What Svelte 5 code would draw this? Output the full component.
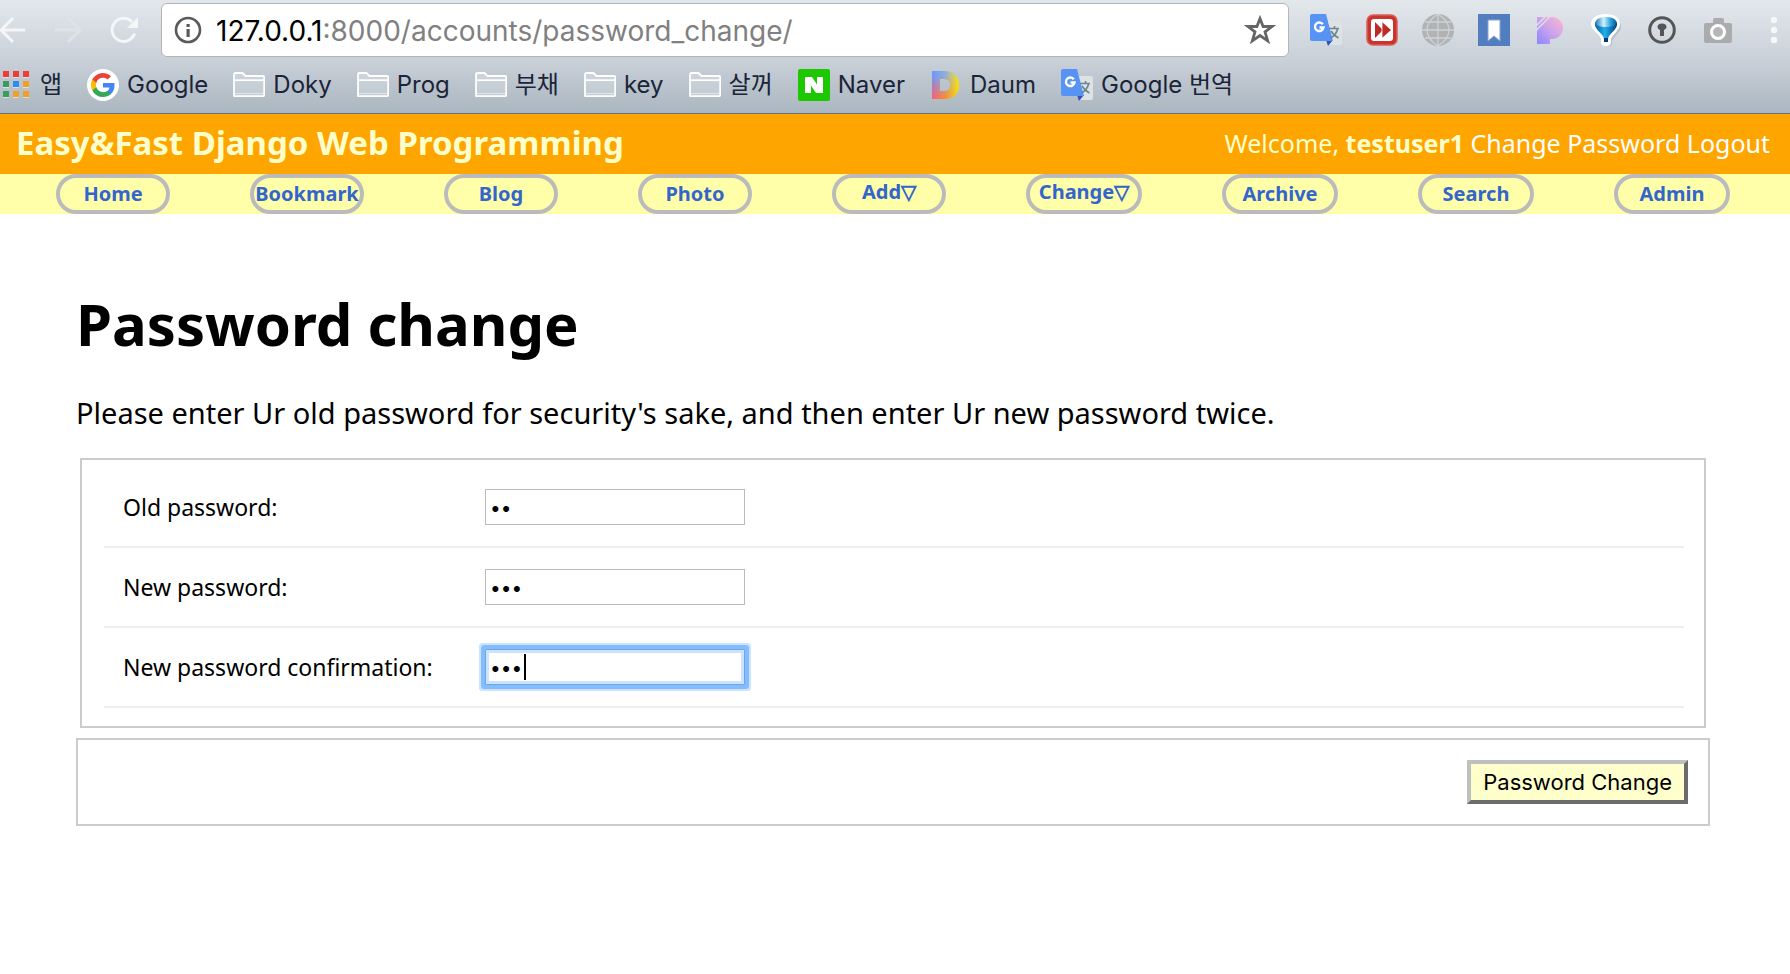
<script lang="ts">
  const bookmarks = [
    { label: '앱', icon: 'apps' },
    { label: 'Google', icon: 'google' },
    { label: 'Doky', icon: 'folder' },
    { label: 'Prog', icon: 'folder' },
    { label: '부채', icon: 'folder' },
    { label: 'key', icon: 'folder' },
    { label: '살꺼', icon: 'folder' },
    { label: 'Naver', icon: 'naver' },
    { label: 'Daum', icon: 'daum' },
    { label: 'Google 번역', icon: 'translate' }
  ];

  const extensions = [
    { label: 'Translate', icon: 'translate' },
    { label: 'Fast forward', icon: 'forward' },
    { label: 'Globe', icon: 'globe' },
    { label: 'Save page', icon: 'save' },
    { label: 'Stripes', icon: 'stripes' },
    { label: 'Balloon', icon: 'balloon' },
    { label: 'Passwords', icon: 'keyhole' },
    { label: 'Capture', icon: 'camera' },
    { label: 'Menu', icon: 'dots' }
  ];

  const menu = [
    { label: 'Home' },
    { label: 'Bookmark' },
    { label: 'Blog' },
    { label: 'Photo' },
    { label: 'Add▽', drop: true },
    { label: 'Change▽', drop: true },
    { label: 'Archive' },
    { label: 'Search' },
    { label: 'Admin' }
  ];

  let fields = $state([
    { id: 'old_password', label: 'Old password:', value: 'ab', active: false },
    { id: 'new_password1', label: 'New password:', value: 'abc', active: false },
    { id: 'new_password2', label: 'New password confirmation:', value: 'abc', active: true }
  ]);
</script>

{#snippet icon(name: string)}
  <svg class="icon" viewBox="0 0 32 32" aria-hidden="true">
    {#if name === 'apps'}
      <path fill="#f23b36" d="M3 2h6v6H3zM13 2h6v6h-6zM23 2h6v6h-6z" />
      <path fill="#3a9d59" d="M3 12h6v6H3zM3 22h6v6H3z" />
      <path fill="#2a8df3" d="M13 12h6v6h-6z" />
      <path fill="#f0a125" d="M23 12h6v6h-6zM13 22h6v6h-6zM23 22h6v6h-6z" />
      <path fill="#fff" opacity=".5" d="M3 8h6v1H3zM13 8h6v1h-6zM23 8h6v1h-6zM3 18h6v1H3zM13 18h6v1h-6zM23 18h6v1h-6zM3 28h6v1H3zM13 28h6v1h-6zM23 28h6v1h-6z" />
    {:else if name === 'google'}
      <circle cx="16" cy="16" r="16" fill="#fff" />
      <g transform="translate(4 4)">
        <path fill="#4285f4" d="M23.5 12.3c0-.8-.1-1.6-.2-2.3H12v4.5h6.500a5.500 5.500 0 0 1-2.400 3.600v3h3.900c2.200-2.100 3.500-5.100 3.500-8.800z" />
        <path fill="#34a853" d="M12 24c3.200 0 6-1.100 8-2.900l-3.900-3a7.200 7.200 0 0 1-10.800-3.800h-4v3.100A12 12 0 0 0 12 24z" />
        <path fill="#fbbc05" d="M5.300 14.300a7.200 7.200 0 0 1 0-4.600V6.600h-4a12 12 0 0 0 0 10.800z" />
        <path fill="#ea4335" d="M12 4.800c1.800 0 3.400.6 4.600 1.800l3.400-3.400A12 12 0 0 0 1.300 6.600l4 3.100A7.200 7.200 0 0 1 12 4.800z" />
      </g>
    {:else if name === 'folder'}
      <path fill="#fff" fill-opacity=".2" stroke="#fff" stroke-width="1.800" stroke-linejoin="round" d="M1 27V5.500q0-1.500 1.500-1.500h7l3 3H30q1.200 0 1.200 1.200V26q0 1.200-1.200 1.200H2.200Q1 27.200 1 26z" />
      <path stroke="#fff" stroke-width="1.700" d="M1 11.200h30" />
      <path stroke="#fff" stroke-opacity=".5" d="M1 24.500h30" />
    {:else if name === 'naver'}
      <rect width="32" height="32" rx="2" fill="#1ec800" />
      <path fill="#fff" d="M7 8h7l5 7.500V8h6v16h-7l-5-7.500V24H7z" />
    {:else if name === 'daum'}
      <defs>
        <linearGradient id="daum-x"><stop offset="0" stop-color="#6b97ff" /><stop offset=".5" stop-color="#90afd8" /><stop offset=".75" stop-color="#c4c982" /><stop offset="1" stop-color="#ffe600" /></linearGradient>
        <linearGradient id="daum-w"><stop offset="0" stop-color="#ff5b72" /><stop offset=".5" stop-color="#ff8a2a" /><stop offset="1" stop-color="#ffd800" /></linearGradient>
        <linearGradient id="daum-f" x2="0" y2="1"><stop offset=".2" stop-color="#000" /><stop offset=".95" stop-color="#fff" /></linearGradient>
        <mask id="daum-m"><rect width="32" height="32" fill="url(#daum-f)" /></mask>
      </defs>
      <path fill="url(#daum-x)" fill-rule="evenodd" d="M2 2h13q14 1 14 14T15 30H2zM10 10v12h4q6 0 6-6t-6-6z" />
      <path fill="url(#daum-w)" mask="url(#daum-m)" fill-rule="evenodd" d="M2 2h13q14 1 14 14T15 30H2zM10 10v12h4q6 0 6-6t-6-6z" />
    {:else if name === 'translate'}
      <path fill="#dfe2e5" d="M14 7h16q2 0 2 2v20q0 2-2 2H19z" />
      <path fill="#3551c4" d="M16 26h7l-5 6z" />
      <path fill="#5693f5" d="M2 0h14l7 27H2q-2 0-2-2V2q0-2 2-2z" />
      <path fill="none" stroke="#fff" stroke-width="2.400" d="M12.800 10.300A4.300 4.300 0 1 0 13.500 13.500H9.500" />
      <path fill="none" stroke="#6b8791" stroke-width="1.600" d="M19 14.500h10M24.500 12v2.500M27.500 15q-1 5.500-7 9M21 17q2.500 4.500 7.500 7" />
    {:else if name === 'forward'}
      <rect x="1" y="1" width="30" height="30" rx="6" fill="#c9352d" stroke="#d9605a" stroke-width="1.500" />
      <rect x="5" y="5" width="22" height="22" rx="3" fill="#fff" />
      <path fill="#bd2b24" d="M9 8l7 7V8l9 8-9 8v-7l-7 7z" />
      <path stroke="#fff" stroke-width=".8" d="M16 8v16" />
    {:else if name === 'globe'}
      <circle cx="16" cy="16" r="16" fill="#b0b2b4" />
      <path fill="none" stroke="#cfd3d6" stroke-width="1.300" d="M16 0v32M0 16h32M3 8h26M3 24h26M16 0Q5 7 5 16t11 16M16 0q11 7 11 16T16 32" />
    {:else if name === 'save'}
      <path fill="#527dbf" d="M0 0h32v32H0z" />
      <path fill="#fff" stroke="#86a5d5" d="M10 6h12v21l-6-5-6 5z" />
    {:else if name === 'stripes'}
      <defs><linearGradient id="stripe-g" x1="1" x2="0" y2="1"><stop offset="0" stop-color="#ffb6cf" /><stop offset=".5" stop-color="#cda2ec" /><stop offset="1" stop-color="#8a86ff" /></linearGradient></defs>
      <path fill="url(#stripe-g)" d="M3 3h15a11 11 0 0 1 0 22h-2v5H3z" />
      <path stroke="#dbe0e5" stroke-width="1.500" d="M2 12L12 2M2 16.500L16.500 2" />
    {:else if name === 'balloon'}
      <defs>
        <linearGradient id="balloon-g"><stop offset="0" stop-color="#1478b4" /><stop offset=".4" stop-color="#d4f0fc" /><stop offset=".7" stop-color="#2ba6e0" /><stop offset="1" stop-color="#07518c" /></linearGradient>
        <linearGradient id="balloon-b"><stop offset="0" stop-color="#0a5f9f" /><stop offset=".45" stop-color="#1fb0ec" /><stop offset="1" stop-color="#063f78" /></linearGradient>
      </defs>
      <path fill="#9aa3ab" opacity=".5" d="M3 13C3 6 9 1 17 1s14 5 14 12c0 5-7 9-9 14v2c0 3-2 4-5 4s-5-1-5-4v-2C10 22 3 18 3 13z" />
      <path fill="#fff" d="M1 10C1 4 7 0 16 0s14 4 14 10c0 6-7 10-9 15v3c0 3-2 4-5 4s-5-1-5-4v-3C9 20 1 16 1 10z" />
      <path fill="url(#balloon-b)" d="M5 9h22c1 5-5 9-8 13-1 2-1 3-1 6h-4c0-3 0-4-1-6-3-4-9-8-8-13z" />
      <path fill="url(#balloon-g)" d="M5 9c1-4 5-6 11-6s10 2 11 6c0 2-5 4-11 4S5 11 5 9z" />
      <path fill="#0a3a66" d="M14 24h4v4h-4z" />
    {:else if name === 'keyhole'}
      <circle cx="16" cy="16" r="12.300" fill="none" stroke="#555" stroke-width="3" />
      <path fill="#555" d="M11.500 13q0-3.500 4.500-3.500t4.500 3.500q0 2-2.500 3v6h-4v-6q-2.500-1-2.500-3z" />
    {:else if name === 'camera'}
      <path fill="#a9abad" d="M4 9h7V6q0-2 2-2h7q2 0 2 2v3h6q2 0 2 2v16q0 2-2 2H4q-2 0-2-2V11q0-2 2-2z" />
      <circle cx="16" cy="18" r="6.500" fill="#b5b7b9" stroke="#fff" stroke-width="3" />
    {:else}
      <g fill="#f5f7f8"><circle cx="16" cy="6" r="3.200" /><circle cx="16" cy="16" r="3.200" /><circle cx="16" cy="26" r="3.200" /></g>
    {/if}
  </svg>
{/snippet}

<div class="browser">
  <div class="toolbar">
    <button class="tool" aria-label="Back">
      <svg class="back" viewBox="0 0 28 32" fill="none" stroke="#f4f6f8" stroke-width="3" aria-hidden="true"><path d="M25 16H2M13 4L1 16l12 12" /></svg>
    </button>
    <button class="tool" aria-label="Forward">
      <svg class="icon" viewBox="0 0 32 32" fill="none" stroke="#dfe3e7" stroke-width="3" aria-hidden="true"><path d="M3 16h24M16 4l12 12-12 12" /></svg>
    </button>
    <button class="tool" aria-label="Reload">
      <svg class="icon" viewBox="0 0 32 32" aria-hidden="true"><path fill="none" stroke="#f4f6f8" stroke-width="3" d="M26.500 19.500A11.500 11.500 0 1 1 24 8" /><path fill="#f4f6f8" d="M30 3v11H19z" /></svg>
    </button>
    <div class="address">
      <svg class="icon" viewBox="0 0 32 32" aria-hidden="true"><circle cx="16" cy="16" r="12" fill="none" stroke="#5a5a5a" stroke-width="2.600" /><path fill="#5a5a5a" d="M14.500 10h3.200v3h-3.200zM14.500 15h3.200v8h-3.200z" /></svg>
      <span class="url"><b>127.0.0.1</b>:8000/accounts/password_change/</span>
      <button class="tool" aria-label="Bookmark this page">
        <svg class="icon" viewBox="0 0 32 32" fill="none" stroke="#666" stroke-width="2.800" aria-hidden="true"><path d="M16 4.500l3.100 8H28l-7 5.300 2.700 9-7.700-5.300-7.700 5.300 2.700-9-7-5.300h8.900z" /></svg>
      </button>
    </div>
    {#each extensions as ext}
      <button class="tool" aria-label={ext.label}>{@render icon(ext.icon)}</button>
    {/each}
  </div>
  <nav class="bookmarks" aria-label="Bookmarks">
    {#each bookmarks as item}
      <a href="#top">{@render icon(item.icon)}<span>{item.label}</span></a>
    {/each}
  </nav>
</div>

<header>
  <div class="brand">Easy&amp;Fast Django Web Programming</div>
  <div class="welcome">Welcome, <strong>testuser1</strong> <a href="#change">Change Password</a> <a href="#logout">Logout</a></div>
</header>

<nav class="menu" aria-label="Site">
  {#each menu as item}
    <a href="#menu" class:drop={item.drop}>{item.label}</a>
  {/each}
</nav>

<main>
  <h1>Password change</h1>
  <p>Please enter Ur old password for security's sake, and then enter Ur new password twice.</p>
  <form onsubmit={(e) => e.preventDefault()}>
    <div class="fields">
      {#each fields as field}
        <div class="row">
          <label for={field.id}>{field.label}</label>
          <div class="control">
            <input id={field.id} type="password" class:active={field.active} bind:value={field.value} />
            {#if field.active}<span class="caret"></span>{/if}
          </div>
        </div>
      {/each}
    </div>
    <div class="submit">
      <button type="submit">Password Change</button>
    </div>
  </form>
</main>

<style>
  :global(body) {
    margin: 0;
    background: #fff;
    color: #000;
    font-family: "Noto Sans", "Open Sans", sans-serif;
  }

  a {
    text-decoration: none;
  }

  .browser {
    background: linear-gradient(#e3e8ec, #c8cfd7 55%, #aab6c0);
    border-bottom: 1px solid #66727c;
    font-family: Inter, "Noto Sans CJK KR", sans-serif;
  }

  .icon {
    display: block;
    flex: none;
    width: 32px;
    height: 32px;
  }

  .back {
    display: block;
    width: 28px;
    height: 32px;
  }

  .tool {
    flex: none;
    padding: 0;
    border: 0;
    background: none;
  }

  .toolbar {
    display: flex;
    align-items: center;
    gap: 24px;
    padding-top: 3px;
  }

  .address {
    flex: 1;
    display: flex;
    align-items: center;
    gap: 12px;
    height: 52px;
    margin: 0 -3px 0 -3px;
    padding: 0 12px 0 10px;
    border: 1px solid #b3b5b7;
    border-radius: 6px;
    background: #fff;
  }

  .url {
    flex: 1;
    padding-top: 2px;
    color: #808080;
    font-size: 28px;
  }

  .url b {
    color: #000;
    font-weight: 400;
  }

  .bookmarks {
    display: flex;
    gap: 25px;
    height: 56px;
  }

  .bookmarks a {
    display: flex;
    align-items: center;
    gap: 8px;
    color: #1b2438;
    font-size: 24px;
    line-height: 30px;
    white-space: nowrap;
  }

  header {
    display: flex;
    align-items: center;
    justify-content: space-between;
    height: 57px;
    padding: 0 20px 3px 16px;
    background: #ffa500;
    color: #ffffcc;
  }

  .brand {
    font-size: 33px;
    font-weight: 700;
  }

  .welcome {
    font-size: 25px;
  }

  .welcome a {
    color: #fff;
  }

  .menu {
    display: grid;
    grid-template-columns: repeat(5, minmax(0, 194fr)) repeat(4, minmax(0, 196fr));
    padding: 0 20px 0 16px;
    background: #ffffaa;
  }

  .menu a {
    display: flex;
    justify-content: center;
    height: 32px;
    margin: 0 40px;
    border: 4px solid #bbb;
    border-radius: 20px;
    color: #3366cc;
    font-size: 20px;
    font-weight: 700;
    line-height: 32px;
    white-space: nowrap;
  }

  .menu .drop {
    line-height: 28px;
  }

  main {
    padding: 70px 80px 0 76px;
  }

  h1 {
    margin: 0;
    font-size: 58px;
    line-height: 80px;
  }

  p {
    margin: 27px 0 23px;
    font-size: 29px;
    line-height: 44px;
  }

  .fields {
    margin: 0 4px 10px;
    padding: 8px 20px 18px 22px;
    border: 2px solid #ccc;
  }

  .row {
    display: grid;
    grid-template-columns: 362px 1fr;
    align-items: center;
    height: 78px;
    padding-left: 19px;
    border-bottom: 2px solid #eee;
    font-size: 23px;
  }

  .control {
    position: relative;
    width: 260px;
  }

  input {
    display: block;
    box-sizing: border-box;
    width: 100%;
    height: 36px;
    padding: 4px 4px 2px;
    border: 1px solid #bbb;
    outline: 0;
    background: #fff;
    color: #000;
    font-family: Inter, sans-serif;
    font-size: 19px;
  }

  .active {
    border-color: #6ca6e8;
    box-shadow: 0 0 0 4px #84bdfd, 0 0 0 6px #cbe3fe, inset 0 0 0 3px #cbe3fe;
    border-radius: 1px;
    caret-color: transparent;
  }

  .caret {
    position: absolute;
    top: 5px;
    left: 39px;
    width: 2px;
    height: 26px;
    background: #000;
  }

  .submit {
    display: flex;
    justify-content: flex-end;
    padding: 20px;
    border: 2px solid #ccc;
  }

  .submit button {
    height: 44px;
    padding: 0 12px;
    border: 4px solid;
    border-color: #bfbfbf #6b6b6b #6b6b6b #bfbfbf;
    background: #ffffcc;
    color: #000;
    font-family: Inter, sans-serif;
    font-size: 22px;
  }
</style>
